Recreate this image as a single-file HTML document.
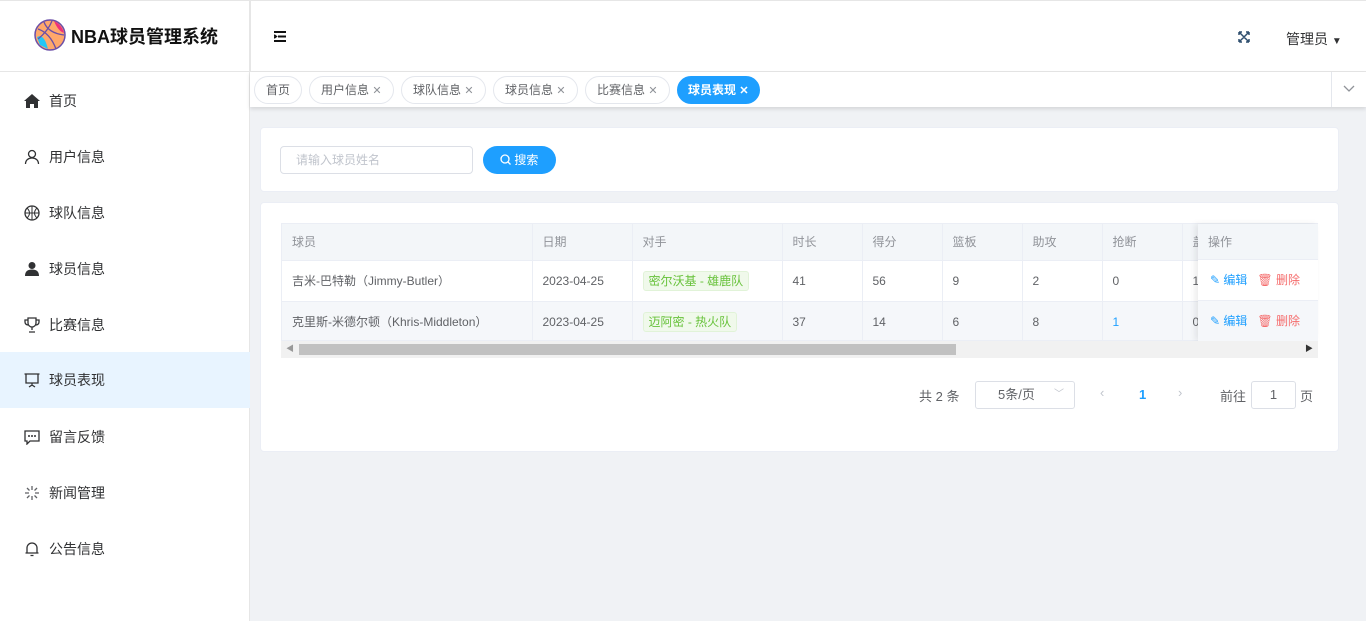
<!DOCTYPE html><html><head><meta charset="utf-8"><style>
*{box-sizing:border-box;margin:0;padding:0}
body{width:1366px;height:621px;overflow:hidden;background:#f0f2f5;font-family:"Liberation Sans","Noto Sans CJK SC",sans-serif;font-size:13px;color:#606266;position:relative}
.abs{position:absolute}
.side{left:0;top:0;width:250px;height:621px;background:#fff;border-right:1px solid #e6e6e6}
.logo{left:0;top:0;width:250px;height:72px;border-bottom:1px solid #e6e6e6;border-top:1px solid #e6e6e6}
.hdr{left:250px;top:0;width:1116px;height:72px;background:#fff;border-top:1px solid #e6e6e6;border-left:1px solid #e6e6e6;border-bottom:1px solid #e6e6e6}
.mi{left:0;width:250px;height:56px;line-height:56px;padding-left:49px;font-size:14px;color:#303133}
.mi svg{position:absolute;left:24px;top:20px}
.tags{left:250px;top:72px;width:1116px;height:35px;background:#fff;box-shadow:0 2px 4px rgba(0,0,0,.12)}
.tag{top:76px;height:28px;line-height:26px;border:1px solid #e4e7ed;border-radius:14px;padding:0 11px;font-size:12px;color:#606266;background:#fff}
.tag span{color:#909399;font-size:11px}
.card{background:#fff;border-radius:4px;border:1px solid #ebeef5}
table{border-collapse:collapse;table-layout:fixed}
td,th{height:41px;padding-left:10px;text-align:left;font-size:12px;border-bottom:1px solid #ebeef5;white-space:nowrap;overflow:hidden}
th{height:36px;background:#f3f6f9;color:#909399;font-weight:normal;border-right:1px solid #ebeef5}
td{border-right:1px solid #ebeef5}
.tg{display:inline-block;background:#f0f9eb;border:1px solid #e1f3d8;color:#67c23a;height:20px;line-height:18px;padding:0 5px;border-radius:3px}
</style></head><body>
<div class="abs side"></div>
<div class="abs logo">
<svg class="abs" style="left:34px;top:18px" width="32" height="32" viewBox="0 0 32 32"><circle cx="16" cy="16" r="15" fill="#ffa86b" stroke="#6b4fa8" stroke-width="1.5"/><path d="M3 18 Q10 14 14 30 L6 26Z" fill="#23c6f5"/><path d="M20 2 Q28 6 30 14 Q24 12 20 2Z" fill="#f0307a"/><path d="M4 10 Q16 14 22 30 M10 3 Q14 14 30 16 M18 2 Q14 12 4 20" stroke="#6b4fa8" stroke-width="1.3" fill="none"/></svg>
<div class="abs" style="left:71px;top:22px;font-size:18px;font-weight:bold;color:#111">NBA球员管理系统</div></div>
<div class="abs hdr">
<svg class="abs" style="left:23px;top:30px" width="13" height="11"><path d="M0 1h12M4 5.5h8M0 10h12M0 4l2 1.5L0 7" stroke="#111" stroke-width="2" fill="none"/></svg>
<svg class="abs" style="left:987px;top:30px" width="12" height="12"><path d="M1 1l10 10M11 1L1 11M1 1v3M1 1h3M11 11v-3M11 11h-3M11 1v3M11 1h-3M1 11v-3M1 11h3" stroke="#2f4f6f" stroke-width="1.5" fill="none"/></svg>
<div class="abs" style="left:1035px;top:28px;font-size:14px;color:#303133">管理员 <span style="font-size:10px">▼</span></div>
</div>
<div class="abs mi" style="top:73px"><svg width="16" height="16" viewBox="0 0 16 16"><path d="M8 1L0 8h2v7h4v-4h4v4h4V8h2z" fill="#303133"/></svg>首页</div>
<div class="abs mi" style="top:129px"><svg width="16" height="16"><circle cx="8" cy="5" r="3.5" stroke="#303133" fill="none" stroke-width="1.3"/><path d="M1.5 15c0-4 3-6 6.5-6s6.5 2 6.5 6" stroke="#303133" fill="none" stroke-width="1.3"/></svg>用户信息</div>
<div class="abs mi" style="top:185px"><svg width="16" height="16"><circle cx="8" cy="8" r="7" stroke="#303133" fill="none" stroke-width="1.3"/><path d="M1 8h14M8 1v14M3 3q5 5 0 10M13 3q-5 5 0 10" stroke="#303133" fill="none" stroke-width="1"/></svg>球队信息</div>
<div class="abs mi" style="top:241px"><svg width="16" height="16"><circle cx="8" cy="4.5" r="3.5" fill="#303133"/><path d="M1 15c0-5 3-6.5 7-6.5s7 1.5 7 6.5z" fill="#303133"/></svg>球员信息</div>
<div class="abs mi" style="top:297px"><svg width="16" height="16"><path d="M4 1h8v5a4 4 0 0 1-8 0zM4 3H1v2a3 3 0 0 0 3 3M12 3h3v2a3 3 0 0 1-3 3M8 10v3M5 15h6" stroke="#303133" fill="none" stroke-width="1.3"/></svg>比赛信息</div>
<div class="abs mi" style="top:352px;background:#e8f4ff;height:56px"><svg width="16" height="16"><path d="M0.5 2h15M2 2v9h12V2M8 11v2M5 15l3-2 3 2" stroke="#303133" fill="none" stroke-width="1.3"/></svg>球员表现</div>
<div class="abs mi" style="top:409px"><svg width="16" height="16"><path d="M1 2h14v10H6l-3 3v-3H1z" stroke="#303133" fill="none" stroke-width="1.3"/><circle cx="5" cy="7" r="1" fill="#303133"/><circle cx="8" cy="7" r="1" fill="#303133"/><circle cx="11" cy="7" r="1" fill="#303133"/></svg>留言反馈</div>
<div class="abs mi" style="top:465px"><svg width="16" height="16"><path d="M8 1v4M8 11v4M1 8h4M11 8h4M3 3l2.5 2.5M10.5 10.5L13 13M13 3l-2.5 2.5M5.5 10.5L3 13" stroke="#606266" stroke-width="1.3"/></svg>新闻管理</div>
<div class="abs mi" style="top:521px"><svg width="16" height="16"><path d="M3 12V7a5 5 0 0 1 10 0v5h1.5H1.5zM6.5 14.5h3" stroke="#303133" fill="none" stroke-width="1.3"/></svg>公告信息</div>
<div class="abs tags"></div>
<div class="abs" style="left:1331px;top:72px;width:35px;height:35px;border-left:1px solid #e4e7ed;background:#fff"><svg class="abs" style="left:11px;top:13px" width="12" height="8"><path d="M1 1l5 5 5-5" stroke="#909399" fill="none" stroke-width="1.3"/></svg></div>
<div class="abs tag" style="left:254px">首页</div>
<div class="abs tag" style="left:309px">用户信息 <span>✕</span></div>
<div class="abs tag" style="left:401px">球队信息 <span>✕</span></div>
<div class="abs tag" style="left:493px">球员信息 <span>✕</span></div>
<div class="abs tag" style="left:585px">比赛信息 <span>✕</span></div>
<div class="abs tag" style="left:677px;background:#1e9fff;border-color:#1e9fff;color:#fff;font-weight:bold;padding:0 10px">球员表现 <span style="color:#fff">✕</span></div>
<div class="abs card" style="left:260px;top:127px;width:1079px;height:65px"></div>
<div class="abs" style="left:280px;top:146px;width:193px;height:28px;border:1px solid #dcdfe6;border-radius:4px;background:#fff;line-height:26px;padding-left:15px;font-size:12px;color:#c0c4cc">请输入球员姓名</div>
<div class="abs" style="left:483px;top:146px;width:73px;height:28px;border-radius:14px;background:#1e9fff;color:#fff;font-size:12px;line-height:28px;padding-left:17px"><svg style="vertical-align:-1px" width="11" height="11"><circle cx="5" cy="5" r="4" stroke="#fff" fill="none" stroke-width="1.3"/><path d="M8 8l2.5 2.5" stroke="#fff" stroke-width="1.3"/></svg> 搜索</div>
<div class="abs card" style="left:260px;top:202px;width:1079px;height:250px"></div>
<div class="abs" style="left:281px;top:223px;width:1037px;height:118px;overflow:hidden;border:1px solid #ebeef5">
<table style="width:1060px"><colgroup><col width="250"><col width="100"><col width="150"><col width="80"><col width="80"><col width="80"><col width="80"><col width="80"><col width="160"></colgroup>
<tr><th>球员</th><th>日期</th><th>对手</th><th>时长</th><th>得分</th><th>篮板</th><th>助攻</th><th>抢断</th><th>盖帽</th></tr>
<tr><td>吉米-巴特勒（Jimmy-Butler）</td><td>2023-04-25</td><td><span class="tg">密尔沃基 - 雄鹿队</span></td><td>41</td><td>56</td><td>9</td><td>2</td><td>0</td><td>1</td></tr>
<tr style="background:#f5f7fa"><td>克里斯-米德尔顿（Khris-Middleton）</td><td>2023-04-25</td><td><span class="tg">迈阿密 - 热火队</span></td><td>37</td><td>14</td><td>6</td><td>8</td><td style="color:#1e9fff">1</td><td>0</td></tr>
</table></div>
<div class="abs" style="left:1198px;top:224px;width:120px;height:117px;background:#fff;box-shadow:-3px 0 6px rgba(0,0,0,.08);font-size:12px">
<div style="height:36px;line-height:36px;padding-left:10px;background:#f3f6f9;color:#909399;border-bottom:1px solid #ebeef5">操作</div>
<div style="height:41px;line-height:41px;padding-left:12px;border-bottom:1px solid #ebeef5"><span style="color:#1e9fff">✎ 编辑</span>&nbsp;&nbsp;&nbsp;<span style="color:#f56c6c">🗑 删除</span></div>
<div style="height:40px;line-height:40px;padding-left:12px;background:#f5f7fa"><span style="color:#1e9fff">✎ 编辑</span>&nbsp;&nbsp;&nbsp;<span style="color:#f56c6c">🗑 删除</span></div></div>
<div class="abs" style="left:281px;top:341px;width:1037px;height:17px;background:#f1f1f1"><div class="abs" style="left:18px;top:3px;width:657px;height:11px;background:#c1c1c1"></div><span class="abs" style="left:5px;top:2px;font-size:8px;color:#999">◀</span><span class="abs" style="right:5px;top:2px;font-size:8px;color:#333">▶</span></div>
<div class="abs" style="left:919px;top:386px;color:#606266">共 2 条</div>
<div class="abs" style="left:975px;top:381px;width:100px;height:28px;border:1px solid #dcdfe6;border-radius:3px;background:#fff;line-height:26px;padding-left:22px">5条/页<span class="abs" style="right:10px;top:0;color:#c0c4cc;font-size:10px">﹀</span></div>
<div class="abs" style="left:1100px;top:385px;color:#c0c4cc">‹</div>
<div class="abs" style="left:1139px;top:387px;color:#1e9fff;font-weight:bold">1</div>
<div class="abs" style="left:1178px;top:385px;color:#c0c4cc">›</div>
<div class="abs" style="left:1220px;top:386px">前往</div>
<div class="abs" style="left:1251px;top:381px;width:45px;height:28px;border:1px solid #dcdfe6;border-radius:3px;text-align:center;line-height:26px;background:#fff">1</div>
<div class="abs" style="left:1300px;top:386px">页</div>
</body></html>
